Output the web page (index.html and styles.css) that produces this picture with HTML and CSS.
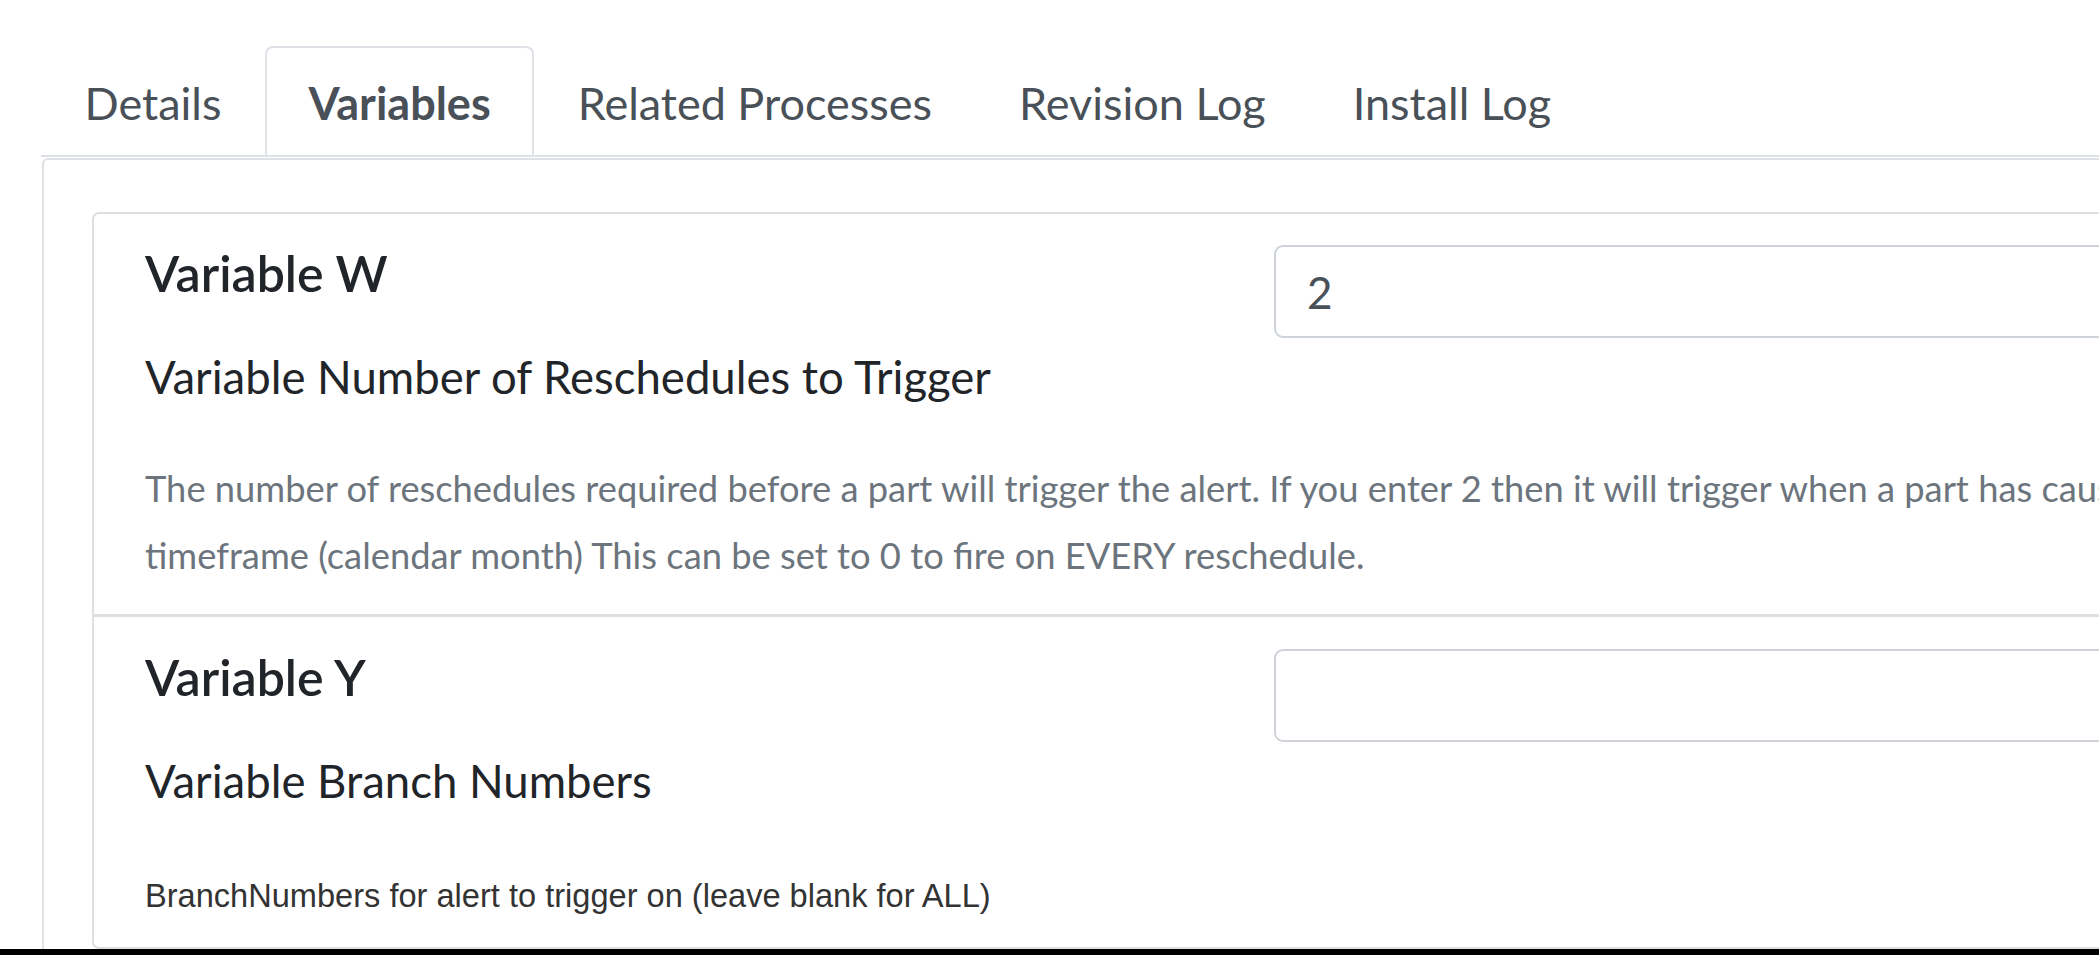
FILE: index.html
```html
<!DOCTYPE html>
<html lang="en">
<head>
<meta charset="utf-8">
<title>Variables</title>
<link rel="stylesheet" href="styles.css">
</head>
<body>
<div class="page">
  <ul class="nav-tabs">
    <li class="tab">Details</li>
    <li class="tab active">Variables</li>
    <li class="tab">Related Processes</li>
    <li class="tab">Revision Log</li>
    <li class="tab">Install Log</li>
  </ul>
  <div class="tab-content">
    <div class="var-card">
      <div class="var-row">
        <div class="var-top">
          <div class="var-left">
            <h4 class="var-title">Variable W</h4>
            <h5 class="var-sub">Variable Number of Reschedules to Trigger</h5>
          </div>
          <div class="var-right">
            <input class="form-input" type="text" value="2">
          </div>
        </div>
        <p class="desc">The number of reschedules required before a part will trigger the alert. If you enter 2 then it will trigger when a part has caused<br>timeframe (calendar month) This can be set to 0 to fire on EVERY reschedule.</p>
      </div>
      <div class="var-row">
        <div class="var-top">
          <div class="var-left">
            <h4 class="var-title">Variable Y</h4>
            <h5 class="var-sub">Variable Branch Numbers</h5>
          </div>
          <div class="var-right">
            <input class="form-input" type="text" value="">
          </div>
        </div>
        <p class="desc-plain">BranchNumbers for alert to trigger on (leave blank for ALL)</p>
      </div>
    </div>
  </div>
</div>
<div class="window-edge"></div>
</body>
</html>
```
FILE: styles.css
```css
html, body {
  margin: 0;
  padding: 0;
  background: #ffffff;
  overflow: hidden;
}
body {
  font-family: Lato, "Liberation Sans", sans-serif;
  color: #212529;
}
.page {
  width: 2600px;
  padding: 46px 0 0 41px;
}
.nav-tabs {
  list-style: none;
  margin: 0;
  padding: 0;
  display: flex;
  border-bottom: 2px solid #dee2e6;
}
.tab {
  font-size: 45px;
  line-height: 54px;
  color: #495057;
  padding: 28px 41.5px 25px;
  border: 2px solid transparent;
  border-bottom: 0;
  border-radius: 8px 8px 0 0;
}
.tab.active {
  font-weight: 700;
  border-color: #dee2e6;
  background: #fff;
}
.tab-content {
  margin: 1px 0 0 1px;
  border: 2px solid #dee2e6;
  border-radius: 6px;
  padding: 52px 0 0 48px;
  height: 900px;
}
.var-card {
  border: 2px solid #dfdfdf;
  border-radius: 7px;
}
.var-row {
  padding: 31px 0 26px 51px;
}
.var-row + .var-row {
  border-top: 3px solid #dfdfdf;
  padding-top: 32px;
  padding-bottom: 28px;
}
.var-top {
  display: grid;
  grid-template-columns: 1129px 1100px;
}
.var-title {
  margin: 0;
  font-size: 50px;
  line-height: 56px;
  font-weight: 600;
  color: #212529;
}
.var-sub {
  margin: 49px 0 0;
  font-size: 45.5px;
  line-height: 54px;
  font-weight: 400;
  color: #212529;
}
.form-input {
  display: block;
  box-sizing: border-box;
  width: 1100px;
  height: 93px;
  margin: 0;
  padding: 0 31px;
  border: 2.5px solid #ced4da;
  border-radius: 9px;
  font-family: Lato, "Liberation Sans", sans-serif;
  font-size: 44px;
  color: #495057;
  background: #fff;
  outline: none;
}
.desc {
  margin: 51px 0 0;
  font-size: 36.3px;
  line-height: 66.6px;
  color: #6c757d;
  white-space: nowrap;
}
.desc-plain {
  margin: 64.5px 0 0;
  font-family: "Liberation Sans", Arial, sans-serif;
  font-size: 32.6px;
  line-height: 46px;
  color: #333333;
}
.window-edge {
  position: fixed;
  left: 0;
  right: 0;
  bottom: 0;
  height: 6px;
  background: #000;
}
```
